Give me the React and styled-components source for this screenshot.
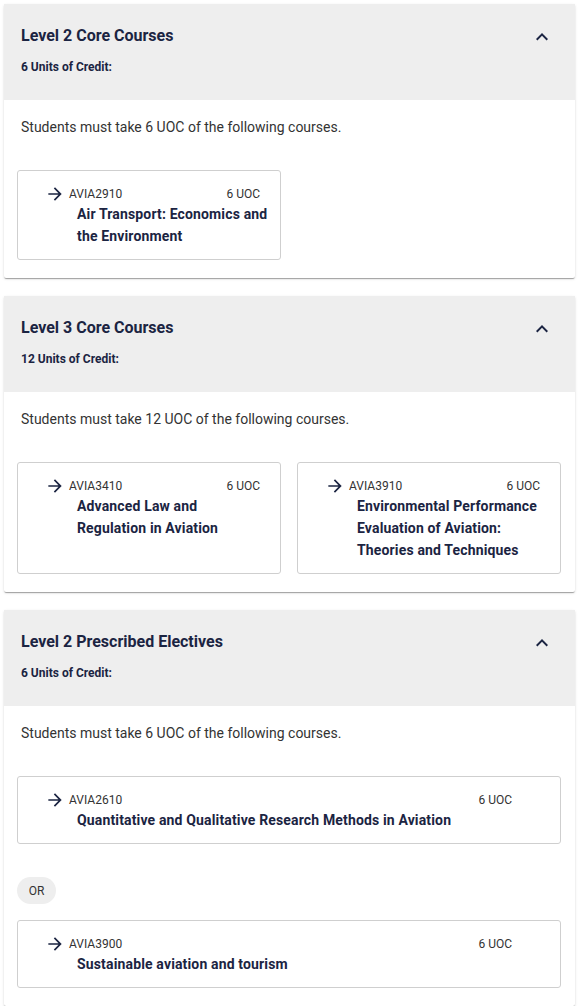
import React from 'react';
import styled, { createGlobalStyle } from 'styled-components';

const GlobalStyle = createGlobalStyle`
  html, body {
    margin: 0;
    padding: 0;
    background: #fff;
    font-family: Roboto, "Noto Sans", Arial, sans-serif;
  }
`

const Page = styled.div`
  padding: 4px 4px 20px 4px;
  display: flex;
  flex-direction: column;
  gap: 18px;
`

const Section = styled.section`
  background: #fff;
  border-radius: 2px;
  box-shadow: 0 2px 1px -1px rgba(0,0,0,0.2), 0 1px 1px 0 rgba(0,0,0,0.14), 0 1px 3px 0 rgba(0,0,0,0.12);
`

const Header = styled.div`
  background: #eeeeee;
  padding: 21px 21px 25px 17px;
  display: flex;
  justify-content: space-between;
  align-items: flex-start;
`

const HeadText = styled.div`
  display: flex;
  flex-direction: column;
  gap: 12px;
`

const Title = styled.h2`
  margin: 0;
  font-size: 16px;
  line-height: 22px;
  font-weight: 700;
  color: #1b2442;
`

const Credit = styled.span`
  font-size: 12px;
  line-height: 16px;
  font-weight: 700;
  color: #1b2442;
`

const Toggle = styled.button`
  border: none;
  background: transparent;
  padding: 0;
  width: 24px;
  height: 24px;
  color: #1b2442;
  cursor: pointer;
  display: flex;
  align-items: center;
  justify-content: center;
`

const Body = styled.div`
  padding: 17px 14px 18px 13px;
`

const Intro = styled.p`
  margin: 0 0 33px 4px;
  font-size: 14px;
  line-height: 20px;
  color: #333;
`

const Grid = styled.div`
  display: grid;
  grid-template-columns: ${p => p.cols === 2 ? '1fr 1fr' : '1fr'};
  gap: 16px;
`

const CourseCard = styled.a`
  display: flex;
  border: 1px solid #cfcfcf;
  border-radius: 3px;
  padding: 15px 12px 12px 27px;
  text-decoration: none;
  color: inherit;
  background: #fff;
`

const ArrowBox = styled.span`
  width: 20px;
  height: 16px;
  flex-shrink: 0;
  display: flex;
  align-items: center;
  justify-content: center;
  color: #1b2442;
  margin-right: 4px;
`

const CourseInfo = styled.div`
  flex: 1;
  display: flex;
  flex-direction: column;
`

const TopRow = styled.div`
  display: flex;
  justify-content: space-between;
  padding-right: ${p => p.wide ? 36 : 8}px;
  font-size: 12px;
  line-height: 16px;
  color: #333;
`

const CourseTitle = styled.div`
  padding-left: 8px;
  margin-top: 1px;
  font-size: 14px;
  line-height: 22px;
  font-weight: 700;
  letter-spacing: 0.15px;
  color: #1b2442;
`

const Or = styled.span`
  display: inline-flex;
  align-items: center;
  justify-content: center;
  width: 39px;
  height: 27px;
  border-radius: 14px;
  background: #eeeeee;
  font-size: 12px;
  color: #333;
  margin: 33px 0 16px 0;
`

const ChevronUp = () => (
  <svg width="24" height="24" viewBox="0 0 24 24" fill="currentColor">
    <path d="M12 8l-6 6 1.41 1.41L12 10.83l4.59 4.58L18 14z" />
  </svg>
)

const ArrowRight = () => (
  <svg width="20" height="20" viewBox="0 0 24 24" fill="currentColor">
    <path d="M12 4l-1.41 1.41L16.17 11H4v2h12.17l-5.58 5.59L12 20l8-8z" />
  </svg>
)

const Course = ({ code, uoc, title, wide }) => (
  <CourseCard href="#">
    <ArrowBox><ArrowRight /></ArrowBox>
    <CourseInfo>
      <TopRow wide={wide}>
        <span>{code}</span>
        <span>{uoc} UOC</span>
      </TopRow>
      <CourseTitle>{title}</CourseTitle>
    </CourseInfo>
  </CourseCard>
)

const Block = ({ title, credit, children }) => (
  <Section>
    <Header>
      <HeadText>
        <Title>{title}</Title>
        <Credit>{credit} Units of Credit:</Credit>
      </HeadText>
      <Toggle aria-label="collapse"><ChevronUp /></Toggle>
    </Header>
    <Body>
      <Intro>Students must take {credit} UOC of the following courses.</Intro>
      {children}
    </Body>
  </Section>
)

export default function App() {
  return (
    <>
      <GlobalStyle />
      <Page>
        <Block title="Level 2 Core Courses" credit={6}>
          <Grid cols={2}>
            <Course code="AVIA2910" uoc={6} title="Air Transport: Economics and the Environment" />
          </Grid>
        </Block>
        <Block title="Level 3 Core Courses" credit={12}>
          <Grid cols={2}>
            <Course code="AVIA3410" uoc={6} title="Advanced Law and Regulation in Aviation" />
            <Course code="AVIA3910" uoc={6} title="Environmental Performance Evaluation of Aviation: Theories and Techniques" />
          </Grid>
        </Block>
        <Block title="Level 2 Prescribed Electives" credit={6}>
          <Grid cols={1}>
            <Course wide code="AVIA2610" uoc={6} title="Quantitative and Qualitative Research Methods in Aviation" />
          </Grid>
          <Or>OR</Or>
          <Grid cols={1}>
            <Course wide code="AVIA3900" uoc={6} title="Sustainable aviation and tourism" />
          </Grid>
        </Block>
      </Page>
    </>
  )
}
